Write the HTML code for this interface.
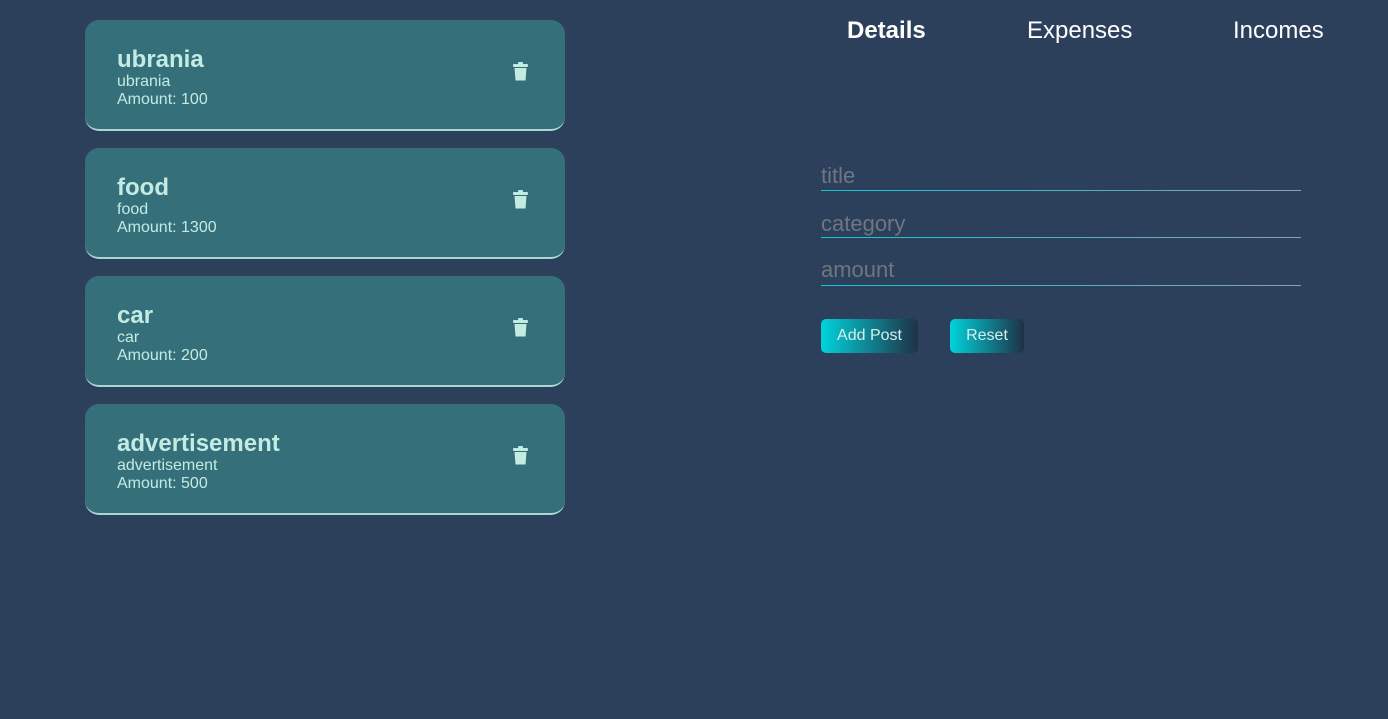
<!DOCTYPE html>
<html><head><style>
body{margin:0;width:1388px;height:719px;background:#2c405c;font-family:"Liberation Sans",sans-serif;position:relative;overflow:hidden}
.card{position:absolute;left:85px;width:480px;height:109px;background:#35707a;border-radius:14px;border-bottom:2px solid #a9d8d4;box-sizing:content-box}
.card h2{position:absolute;left:32px;top:27px;margin:0;font-size:24px;font-weight:bold;color:#c3ebe3;line-height:26px}
.card .s{position:absolute;left:32px;top:53px;font-size:16px;color:#c3ebe3;line-height:18px}
.card svg{position:absolute;left:428px;top:42px}
.nav{position:absolute;top:17px;font-size:24px;color:#fff}
.in{position:absolute;left:821px;width:480px;height:1px;background:linear-gradient(90deg,#10c8d4,#8aa0b0)}
.ph{position:absolute;left:821px;font-size:22px;color:#6e7680}
.btn{position:absolute;top:319px;height:34px;border-radius:5px;background:linear-gradient(90deg,#00d3db,#1f3146);color:#d4f0ee;font-size:16px;line-height:34px;text-align:center}
</style></head><body>
<div class="card" style="top:20px"><h2>ubrania</h2><div class="s">ubrania<br>Amount: 100</div><svg width="15" height="19" viewBox="0 0 15 19"><rect x="0" y="2" width="15" height="3" rx="1" fill="#c3ebe3"/><rect x="5" y="0" width="5" height="3" rx="1" fill="#c3ebe3"/><path d="M1.5 6h12l-1 12.5h-10z" fill="#c3ebe3"/></svg></div>
<div class="card" style="top:148px"><h2>food</h2><div class="s">food<br>Amount: 1300</div><svg width="15" height="19" viewBox="0 0 15 19"><rect x="0" y="2" width="15" height="3" rx="1" fill="#c3ebe3"/><rect x="5" y="0" width="5" height="3" rx="1" fill="#c3ebe3"/><path d="M1.5 6h12l-1 12.5h-10z" fill="#c3ebe3"/></svg></div>
<div class="card" style="top:276px"><h2>car</h2><div class="s">car<br>Amount: 200</div><svg width="15" height="19" viewBox="0 0 15 19"><rect x="0" y="2" width="15" height="3" rx="1" fill="#c3ebe3"/><rect x="5" y="0" width="5" height="3" rx="1" fill="#c3ebe3"/><path d="M1.5 6h12l-1 12.5h-10z" fill="#c3ebe3"/></svg></div>
<div class="card" style="top:404px"><h2>advertisement</h2><div class="s">advertisement<br>Amount: 500</div><svg width="15" height="19" viewBox="0 0 15 19"><rect x="0" y="2" width="15" height="3" rx="1" fill="#c3ebe3"/><rect x="5" y="0" width="5" height="3" rx="1" fill="#c3ebe3"/><path d="M1.5 6h12l-1 12.5h-10z" fill="#c3ebe3"/></svg></div>
<div class="nav" style="left:847px;font-weight:bold">Details</div>
<div class="nav" style="left:1027px">Expenses</div>
<div class="nav" style="left:1233px">Incomes</div>
<div class="ph" style="top:163px">title</div><div class="in" style="top:190px"></div>
<div class="ph" style="top:211px">category</div><div class="in" style="top:237px"></div>
<div class="ph" style="top:257px">amount</div><div class="in" style="top:285px"></div>
<div class="btn" style="left:821px;width:97px">Add Post</div>
<div class="btn" style="left:950px;width:74px">Reset</div>
</body></html>
